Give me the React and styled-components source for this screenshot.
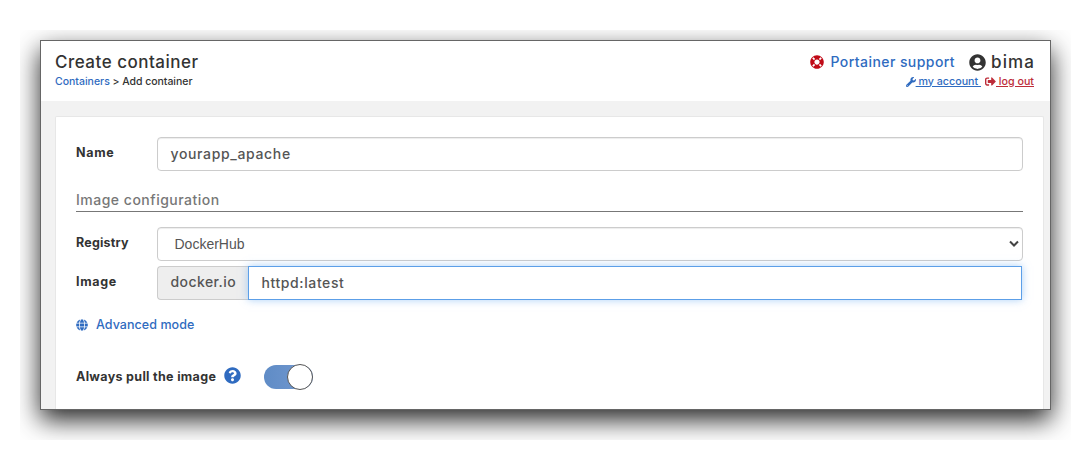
import React from 'react';
import styled, { createGlobalStyle } from 'styled-components';
import { FaGlobe, FaLifeRing, FaQuestionCircle, FaSignOutAlt, FaUserCircle, FaWrench } from 'react-icons/fa';

const GlobalStyle = createGlobalStyle`
  * {
    box-sizing: border-box;
  }
  body {
    margin: 0;
    background: #fff;
    font-family: Inter, 'Open Sans', sans-serif;
    color: #333;
  }
`;

const Stage = styled.div`
  width: 1051px;
  height: 410px;
  margin: 30px 20px 0;
  padding: 10px 20px 30px;
  overflow: hidden;
`;

const Window = styled.div`
  display: flex;
  flex-direction: column;
  width: 1011px;
  height: 370px;
  border: 1px solid #666;
  background: #f2f2f2;
  box-shadow: 0 10px 24px rgba(0, 0, 0, 0.85);
`;

const Header = styled.header`
  display: flex;
  justify-content: space-between;
  height: 60px;
  padding: 10px 16px 0 14px;
  background: #fff;
`;

const HeaderSide = styled.div`
  display: flex;
  flex-direction: column;
  align-items: ${(props) => (props.$end ? 'flex-end' : 'flex-start')};
`;

const HeaderRow = styled.div`
  display: flex;
  align-items: center;
  height: ${(props) => props.$height};
`;

const Text = styled.span`
  font-size: ${(props) => props.$size};
  font-weight: ${(props) => props.$weight || 500};
  letter-spacing: ${(props) => props.$spacing || 'normal'};
  color: ${(props) => props.$color || 'inherit'};
  line-height: 20px;
  white-space: pre;
`;

const Support = styled.a`
  display: flex;
  align-items: center;
  gap: 6px;
  margin-right: 14px;
  color: #2f6bc0;
  svg {
    color: #c00a17;
  }
`;

const User = styled.div`
  display: flex;
  align-items: center;
  gap: 5px;
  margin-right: -1px;
`;

const SmallLink = styled.a`
  display: flex;
  align-items: center;
  margin-left: ${(props) => props.$gap || 0};
  color: ${(props) => props.$color};
  ${Text} {
    text-decoration: underline;
  }
`;

const Widget = styled.main`
  flex: 1;
  margin: 15px 6px 0 14px;
  padding: 20px 20px 0;
  border: 1px solid #e7e7e7;
  border-bottom: 0;
  border-radius: 2px 2px 0 0;
  background: #fff;
`;

const FormRow = styled.div`
  display: flex;
  height: 34px;
  margin-bottom: ${(props) => props.$bottom || 0};
`;

const Label = styled.label`
  width: 81px;
  padding-top: 4px;
  line-height: 20px;
`;

const Field = styled.div`
  display: flex;
  flex: 1;
  align-items: center;
  justify-content: space-between;
  padding: 0 3px 0 ${(props) => props.$left || '12.5px'};
  border: 1px solid #ccc;
  border-radius: 4px;
  box-shadow: inset 0 1px 1px rgba(0, 0, 0, 0.075);
  color: #555;
`;

const Addon = styled.div`
  display: flex;
  align-items: center;
  width: 91px;
  padding: 0 0 2px 12.5px;
  border: 1px solid #ccc;
  border-right: 0;
  border-radius: 4px 0 0 4px;
  background: #eee;
  color: #555;
`;

const FocusedField = styled(Field)`
  margin-right: 1px;
  border-color: #5c9fe8;
  border-radius: 0;
  box-shadow: 0 0 8px rgba(102, 170, 240, 0.55);
`;

const SectionTitle = styled.div`
  height: 24px;
  margin-bottom: 15px;
  padding-top: 2px;
  border-bottom: 1px solid #777;
  color: #777;
  line-height: 18px;
`;

const SelectValue = styled.span`
  font: 14px 'Liberation Sans', Arial, sans-serif;
`;

const ModeLink = styled.a`
  display: flex;
  align-items: center;
  gap: 8px;
  height: 20px;
  margin-top: 15px;
  color: #2f6bc0;
`;

const SwitchRow = styled.div`
  display: flex;
  align-items: center;
  height: 26px;
  margin-top: 29px;
`;

const Help = styled.span`
  display: flex;
  margin: 0 23px 4px 8px;
  color: #2f6bc0;
`;

const Switch = styled.span`
  display: flex;
  align-items: center;
  justify-content: flex-end;
  width: 49px;
  height: 24px;
  border-radius: 13px;
  background: linear-gradient(90deg, #5f8cc6, #7499d0);
`;

const Knob = styled.span`
  flex: none;
  width: 26px;
  height: 26px;
  border: 1px solid #555;
  border-radius: 50%;
  background: #fff;
`;

const App = () => {
  return (
    <>
      <GlobalStyle />
      <Stage>
        <Window>
          <Header>
            <HeaderSide>
              <HeaderRow $height="22px">
                <Text $size="17px" $spacing="0.5px">Create container</Text>
              </HeaderRow>
              <HeaderRow $height="17px">
                <Text $size="10.5px" $color="#2f6bc0">Containers</Text>
                <Text $size="10.5px" $spacing="-0.04px"> &gt; Add container</Text>
              </HeaderRow>
            </HeaderSide>
            <HeaderSide $end>
              <HeaderRow $height="22px">
                <Support>
                  <FaLifeRing size={14} />
                  <Text $size="14px" $spacing="0.43px">Portainer support</Text>
                </Support>
                <User>
                  <FaUserCircle size={17} />
                  <Text $size="17px" $spacing="1.1px">bima</Text>
                </User>
              </HeaderRow>
              <HeaderRow $height="17px">
                <SmallLink $color="#2f6bc0">
                  <FaWrench size={10} />
                  <Text $size="10.7px"> my account </Text>
                </SmallLink>
                <SmallLink $color="#bd2c39" $gap="4px">
                  <FaSignOutAlt size={11} />
                  <Text $size="10.7px"> log out</Text>
                </SmallLink>
              </HeaderRow>
            </HeaderSide>
          </Header>
          <Widget>
            <FormRow $bottom="17px">
              <Label><Text $size="12.5px" $weight={700} $spacing="0.7px">Name</Text></Label>
              <Field><Text $size="14px" $spacing="0.65px">yourapp_apache</Text></Field>
            </FormRow>
            <SectionTitle><Text $size="14px" $spacing="0.5px">Image configuration</Text></SectionTitle>
            <FormRow $bottom="5px">
              <Label><Text $size="12.5px" $weight={700} $spacing="0.2px">Registry</Text></Label>
              <Field $left="16.5px">
                <SelectValue>DockerHub</SelectValue>
                <svg width="10" height="8" viewBox="0 0 10 8">
                  <path d="M1 1.5 L5 5.5 L9 1.5" fill="none" stroke="#444" strokeWidth="2" />
                </svg>
              </Field>
            </FormRow>
            <FormRow>
              <Label><Text $size="12.5px" $weight={700} $spacing="0.7px">Image</Text></Label>
              <Addon><Text $size="14px" $spacing="0.43px">docker.io</Text></Addon>
              <FocusedField><Text $size="14px" $spacing="0.6px">httpd:latest</Text></FocusedField>
            </FormRow>
            <ModeLink>
              <FaGlobe size={12} />
              <Text $size="12.5px" $spacing="0.06px">Advanced mode</Text>
            </ModeLink>
            <SwitchRow>
              <Text $size="12.5px" $weight={700} $spacing="0.32px">Always pull the image</Text>
              <Help><FaQuestionCircle size={17} /></Help>
              <Switch><Knob /></Switch>
            </SwitchRow>
          </Widget>
        </Window>
      </Stage>
    </>
  );
};

export default App;
